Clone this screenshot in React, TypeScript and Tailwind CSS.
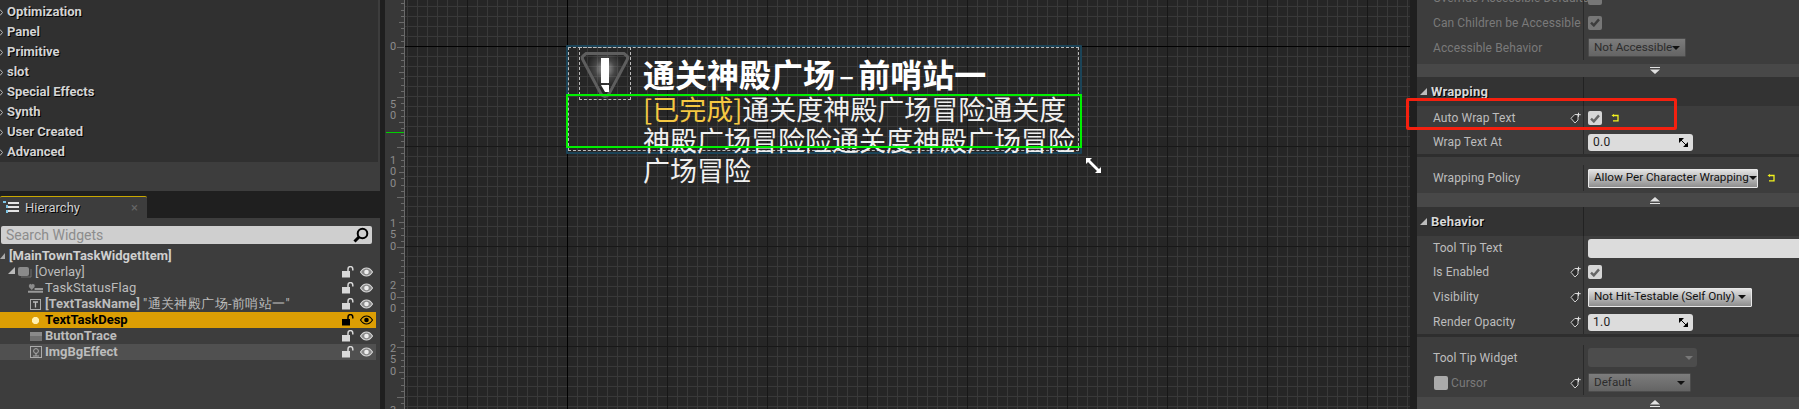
import type { ReactNode } from "react";

const PALETTE = ["Optimization", "Panel", "Primitive", "slot", "Special Effects", "Synth", "User Created", "Advanced"];
const RULER_LABELS = [
  { y: 47, text: "0" },
  { y: 110, text: "50" },
  { y: 172, text: "100" },
  { y: 235, text: "150" },
  { y: 297, text: "200" },
  { y: 360, text: "250" },
  { y: 422, text: "300" },
];

const LockEye = ({ dark }: { dark?: boolean }) => {
  const c = dark ? "#000" : "#d8d8d8";
  return (
    <div className="absolute left-[342px] top-[2px] flex gap-[6px]">
      <svg width="12" height="12" viewBox="0 0 12 12">
        <rect x="0" y="5" width="8" height="6.5" fill={c} />
        <path d="M6 5V3a2.4 2.4 0 0 1 4.8 0v1.4" stroke={c} strokeWidth="1.5" fill="none" />
      </svg>
      <svg width="13" height="12" viewBox="0 0 13 12">
        <path d="M0.5 6C2.5 2.8 4.5 2 6.5 2s4 .8 6 4c-2 3.2-4 4-6 4s-4-.8-6-4Z" stroke={c} strokeWidth="1.2" fill={dark ? "none" : "#8a8a8a"} />
        <circle cx="6.5" cy="6" r="2.3" fill={dark ? "#000" : "#eee"} />
      </svg>
    </div>
  );
};

const TreeRow = ({ icon, children, className = "" }: { icon: ReactNode; children: ReactNode; className?: string }) => (
  <div className={`relative h-4 w-[376px] ${className}`}>
    <div className="absolute left-[28px] top-0 flex h-4 w-[15px] items-center justify-center">{icon}</div>
    <div className="absolute left-[45px] top-0 whitespace-nowrap leading-4">{children}</div>
    <LockEye dark={className.includes("bg-[#dc9e04]")} />
  </div>
);

const Check = ({ dim }: { dim?: boolean }) => (
  <div className={`flex h-[14px] w-[14px] items-center justify-center rounded-[2px] ${dim ? "bg-[#777]" : "bg-[#d6d6d6]"}`}>
    <svg width="10" height="9" viewBox="0 0 10 9">
      <path d="M1 4.6 3.8 7.4 9 1.4" stroke={dim ? "#3d3d3d" : "#666"} strokeWidth="2.4" fill="none" />
    </svg>
  </div>
);

const Bind = () => (
  <svg width="11" height="11" viewBox="0 0 11 11" className="absolute left-[153px] top-1/2 -translate-y-1/2">
    <path d="M1 5.8 4.8 2H8V7.5L5 10.5Z" fill="#2c2c2c" stroke="#d0d0d0" strokeWidth="1" />
    <path d="M8.5 0V4.4M6.3 2.2H10.7" stroke="#e0e0e0" strokeWidth="1" />
  </svg>
);

const Reset = ({ className }: { className: string }) => (
  <svg width="8" height="8" viewBox="0 0 8 8" className={className}>
    <path d="M2 1.5H7V6.8H2" stroke="#f2f21e" strokeWidth="1.3" fill="none" />
    <path d="M3 0V3L0.5 1.5Z" fill="#f2f21e" />
  </svg>
);

const Caret = ({ color = "#111" }: { color?: string }) => (
  <svg width="8" height="4" viewBox="0 0 8 4" className="shrink-0">
    <path d="M0 0H8L4 4Z" fill={color} />
  </svg>
);

const Drop = ({ label, width, dim }: { label: string; width: string; dim?: boolean }) => (
  <div
    className={`flex h-[19px] items-center justify-between rounded-[1px] pr-[5px] pl-[5px] text-[11.7px] ${width} ${
      dim
        ? "border border-[#4c4c4c] bg-[linear-gradient(#7c7c7c,#646464)] text-[#2c2c2c]"
        : "border border-[#e8e8e8] bg-[linear-gradient(#e2e2e2,#8e8e8e)] text-[#111]"
    }`}
  >
    <span className="whitespace-nowrap">{label}</span>
    <Caret />
  </div>
);

const Spin = ({ value }: { value: string }) => (
  <div className="relative flex h-[17px] w-[105px] items-center rounded-[3px] bg-[#dcdcdc] pl-[5px] text-[12px] tracking-[0.3px] text-[#222]">
    {value}
    <svg width="9" height="9" viewBox="0 0 9 9" className="absolute right-[5px] top-[4px]">
      <path d="M0 0H5L0 5ZM9 9H4L9 4Z" fill="#000" />
      <path d="M2 2 7 7" stroke="#000" strokeWidth="1" />
    </svg>
  </div>
);

const Prop = ({
  label,
  h,
  dim,
  bind,
  children,
  labelPrefix,
}: {
  label: string;
  h: string;
  dim?: boolean;
  bind?: boolean;
  children?: ReactNode;
  labelPrefix?: ReactNode;
}) => (
  <div className={`relative flex items-center ${h}`}>
    <div className={`relative flex h-full w-[166px] shrink-0 items-center gap-[3px] pl-[16px] ${dim ? "text-[#7a7a7a]" : "text-[#bdbdbd]"}`}>
      {labelPrefix}
      <span className="whitespace-nowrap tracking-[0.1px]">{label}</span>
      {bind && <Bind />}
    </div>
    <div className="relative flex h-full grow items-center border-l border-l-[#2a2a2a] pl-[4px]">{children}</div>
  </div>
);

const Bar = ({ up, h }: { up?: boolean; h: string }) => (
  <div className={`flex items-center bg-[#484848] pl-[233px] ${h}`}>
    <svg width="10" height="7" viewBox="0 0 10 7">
      {up ? <path d="M0 6H10V7H0ZM5 0 10 4.6H0Z" fill="#e0e0e0" /> : <path d="M0 0H10V1H0ZM0 2.4H10L5 7Z" fill="#e0e0e0" />}
    </svg>
  </div>
);

const Section = ({ title, h }: { title: string; h: string }) => (
  <div className={`relative flex items-center bg-[#333] ${h}`}>
    <div className="flex h-full w-[166px] items-center pl-[3px]">
      <svg width="7" height="7" viewBox="0 0 7 7" className="mr-[4px]">
        <path d="M7 0V7H0Z" fill="#bdbdbd" />
      </svg>
      <span className="text-[13px] font-bold tracking-[0.2px] text-[#d8d8d8] [text-shadow:1px_1px_0_#000]">{title}</span>
    </div>
    <div className="h-full border-l border-l-[#222]" />
  </div>
);

const App = () => (
  <div className="relative flex h-[409px] w-[1799px] overflow-hidden bg-[#1f1f1f] font-['Roboto',sans-serif] text-[12px]">
    {/* left column: palette + hierarchy */}
    <div className="flex w-[380px] shrink-0 flex-col">
      <div className="h-[191px] bg-[#3d3d3d]">
        <div className="h-[162px] w-[378px] bg-[#303030] pt-[2px]">
          {PALETTE.map((name) => (
            <div key={name} className="relative h-5 pl-[7px] text-[13px] leading-5 font-bold text-[#d4d4d4] [text-shadow:1px_1px_0_#000]">
              <svg width="3" height="7" viewBox="0 0 3 7" className="absolute top-[7px] left-0">
                <path d="M0 0.5 2.5 3.5 0 6.5" stroke="#bbb" fill="none" />
              </svg>
              {name}
            </div>
          ))}
        </div>
      </div>
      <div className="mt-[5px] flex h-[22px] w-[147px] items-center rounded-t-[2px] border-t border-t-[#c9a800] bg-[#3d3d3d] pl-[3px]">
        <svg width="16" height="13" viewBox="0 0 16 13">
          <path d="M5 1H16V3H5ZM5 5H16V7H5ZM5 9H16V11H5Z" fill="#e4e4e4" />
          <path d="M0 0h3v2h-3zM3 4h2v3h-2zM3 9h2v3h-2z" fill="#7ec7e8" />
        </svg>
        <span className="ml-[6px] text-[13px] text-[#d0d0d0] [text-shadow:1px_1px_0_#000]">Hierarchy</span>
        <span className="mr-[9px] ml-auto text-[13px] leading-none text-[#666]">×</span>
      </div>
      <div className="grow bg-[#3d3d3d] pt-[8px] text-[13px] text-[#bcbcbc]">
        <div className="relative ml-[1px] flex h-[18px] w-[371px] items-center rounded-[2px] bg-[#cfcfcf] pl-[5px] text-[14px] text-[#8c8c8c]">
          Search Widgets
          <svg width="16" height="16" viewBox="0 0 16 16" className="absolute top-[1px] right-[3px]">
            <circle cx="9.5" cy="6.5" r="4.8" stroke="#000" strokeWidth="2" fill="none" />
            <path d="M6 10 1.5 14.5" stroke="#000" strokeWidth="3" />
          </svg>
        </div>
        <div className="mt-[4px] flex h-4 items-center text-[13px] font-bold text-[#cfcfcf]">
          <svg width="6" height="6" viewBox="0 0 6 6" className="mr-[3px]">
            <path d="M5 0V6H0Z" fill="#aaa" />
          </svg>
          [MainTownTaskWidgetItem]
        </div>
        <div className="relative h-4 w-[376px]">
          <svg width="24" height="14" viewBox="0 0 24 14" className="absolute top-[1px] left-[8px]">
            <path d="M7 2V9H0Z" fill="#bbb" />
            <rect x="10" y="2" width="11" height="9" rx="2" fill="#8a8a8a" />
            <path d="M13 12H23V4" stroke="#707070" fill="none" />
          </svg>
          <span className="absolute left-[35px] leading-4">[Overlay]</span>
          <LockEye />
        </div>
        <TreeRow
          icon={
            <svg width="16" height="11" viewBox="0 0 16 11">
              <path d="M1 1.5 3 0.5 4 1.5 5 0.5 7 1.5V4L4 7 1 4Z" fill="#8c8c8c" />
              <path d="M0 8H16V10H0ZM7 5H16V7H7Z" fill="#999" />
            </svg>
          }
        >
          <span className="tracking-[0.15px]">TaskStatusFlag</span>
        </TreeRow>
        <TreeRow
          icon={
            <svg width="11" height="11" viewBox="0 0 11 11">
              <rect x="0.5" y="0.5" width="10" height="10" fill="none" stroke="#aaa" />
              <path d="M3 3H8M5.5 3V8.5" stroke="#bbb" strokeWidth="1.3" />
            </svg>
          }
        >
          <b>[TextTaskName]</b> <span className="tracking-[0.4px]">"通关神殿广场-前哨站一"</span>
        </TreeRow>
        <TreeRow
          className="bg-[#dc9e04] font-bold text-[#000]"
          icon={
            <svg width="7" height="7" viewBox="0 0 7 7">
              <path d="M2 0H5L7 2V5L5 7H2L0 5V2Z" fill="#fff0b0" />
            </svg>
          }
        >
          TextTaskDesp
        </TreeRow>
        <TreeRow
          className="font-bold"
          icon={
            <svg width="12" height="9" viewBox="0 0 12 9">
              <rect width="12" height="9" fill="#8a8a8a" />
              <rect y="4" width="12" height="5" fill="#707070" />
            </svg>
          }
        >
          ButtonTrace
        </TreeRow>
        <TreeRow
          className="bg-[#505050] font-bold"
          icon={
            <svg width="12" height="12" viewBox="0 0 12 12">
              <rect x="0.5" y="0.5" width="11" height="11" fill="none" stroke="#aaa" />
              <circle cx="6" cy="5" r="2.4" fill="none" stroke="#aaa" />
              <path d="M6 7V10M3 10H9" stroke="#aaa" />
            </svg>
          }
        >
          ImgBgEffect
        </TreeRow>
      </div>
    </div>

    {/* ruler */}
    <div className="relative ml-[5px] w-[20px] shrink-0 border-r border-r-[#6a6a6a] bg-[#383838] text-[11px] leading-[11px] text-[#8c8c8c]">
      <svg width="19" height="409" className="absolute top-0 left-0">
        {Array.from({ length: 66 }).map((_, i) => {
          const y = Math.round(47 + (i - 7) * 6.25);
          const len = i % 8 === 7 ? 7 : i % 4 === 3 ? 5 : 3;
          return <line key={i} x1={19 - len} x2="19" y1={y + 0.5} y2={y + 0.5} stroke="#6a6a6a" />;
        })}
        <line x1="1" x2="19" y1="132.5" y2="132.5" stroke="#00d000" />
      </svg>
      {RULER_LABELS.map((l) => (
        <div key={l.y} className="absolute left-[5px] w-[6px] text-center" style={{ top: l.y - (l.text.length * 11.5) / 2 }}>
          {l.text.split("").map((d, i) => (
            <div key={i} className="h-[11.5px]">
              {d}
            </div>
          ))}
        </div>
      ))}
    </div>

    {/* designer canvas */}
    <div className="relative w-[1005px] shrink-0 overflow-hidden bg-[#262626] font-['Noto_Sans_CJK_SC',sans-serif]">
      <svg className="absolute inset-0 h-full w-full">
        <defs>
          <pattern id="minor" width="10" height="10" x="2" y="6" patternUnits="userSpaceOnUse">
            <path d="M0.5 0V10M0 0.5H10" stroke="#393939" strokeWidth="1" />
          </pattern>
        </defs>
        <rect width="100%" height="100%" fill="url(#minor)" />
        {[62, 262, 362, 462, 562, 662, 762, 862, 962].map((x) => (
          <line key={x} x1={x + 0.5} x2={x + 0.5} y1="0" y2="409" stroke="#171717" />
        ))}
        {[146, 246, 346].map((y) => (
          <line key={y} x1="0" x2="1005" y1={y + 0.5} y2={y + 0.5} stroke="#171717" />
        ))}
        <line x1="162.5" x2="162.5" y1="0" y2="409" stroke="#000" />
        <line x1="0" x2="1005" y1="46.5" y2="46.5" stroke="#000" />
      </svg>

      {/* selected widget */}
      <div className="absolute top-[45px] left-[161px] h-[109px] w-[516px] rounded-[1px] border-2 border-[#1b4458]" />
      <div className="absolute top-[47px] left-[163px] h-[104px] w-[511px] border border-dashed border-[#bdbdbd]" />
      <div className="absolute top-[47px] left-[174px] h-[53px] w-[52px] border border-dashed border-[#bdbdbd]" />
      <svg width="52" height="53" viewBox="0 0 52 53" className="absolute top-[47px] left-[174px]">
        <defs>
          <radialGradient id="glow">
            <stop offset="0" stopColor="#fff" stopOpacity="0.6" />
            <stop offset="0.55" stopColor="#fff" stopOpacity="0.15" />
            <stop offset="1" stopColor="#fff" stopOpacity="0" />
          </radialGradient>
        </defs>
        <circle cx="26" cy="22" r="18" fill="url(#glow)" />
        <path d="M4 9Q2.5 11 4 13L22 47Q26 52 30 47L48 13Q49.5 11 48 9L45 6.5H7Z" fill="none" stroke="#5e5e5e" strokeWidth="3" />
        <rect x="22" y="11" width="8" height="25" fill="#fff" />
        <path d="M22 38H30V45H26Z" fill="#fff" />
      </svg>
      <div className="absolute top-[52px] left-[238px] h-[42px] whitespace-nowrap text-[32px] leading-[42px] font-bold text-white">
        通关神殿广场<span className="mx-[6px] inline-block scale-x-150 font-normal">-</span>前哨站一
      </div>
      <div className="absolute top-[94px] left-[238px] w-[440px] text-[27px] leading-[30.5px] font-normal text-[#f0f0f0]">
        <span className="text-[#f5c842]">[已完成]</span>
        通关度神殿广场冒险通关度
        <br />
        神殿广场冒险险通关度神殿广场冒险
        <br />
        广场冒险
      </div>
      <div className="absolute top-[94px] left-[161px] h-[54px] w-[516px] border-2 border-[#00f000]" />
      <svg width="17" height="17" viewBox="0 0 17 17" className="absolute top-[157px] left-[680px]">
        <path d="M1 1H7L5 3 14 12 16 10V16H10L12 14 3 5 1 7Z" fill="#fff" />
      </svg>
    </div>

    {/* details panel */}
    <div className="ml-[7px] w-[382px] shrink-0 bg-[#3d3d3d] text-[12px]">
      <div className="-mt-[15px]">
        <Prop label="Override Accessible Defaults" h="h-[25px]" dim>
          <div className="h-[14px] w-[14px] rounded-[2px] bg-[#777]" />
        </Prop>
        <Prop label="Can Children be Accessible" h="h-[25px]" dim>
          <Check dim />
        </Prop>
        <Prop label="Accessible Behavior" h="h-[25px]" dim>
          <Drop label="Not Accessible" width="w-[98px]" dim />
        </Prop>
        <div className="h-[4px]" />
        <Bar h="h-[13px]" />
        <Section title="Wrapping" h="h-[29px]" />
        <Prop label="Auto Wrap Text" h="h-[24px]" bind>
          <Check />
          <Reset className="ml-[9px]" />
        </Prop>
        <Prop label="Wrap Text At" h="h-[24px]">
          <Spin value="0.0" />
        </Prop>
        <div className="h-[11px] border-t-[3px] border-t-[#2e2e2e]" />
        <Prop label="Wrapping Policy" h="h-[26px]">
          <Drop label="Allow Per Character Wrapping" width="w-[170px]" />
          <Reset className="ml-[9px]" />
        </Prop>
        <div className="h-[2px]" />
        <Bar up h="h-[14px]" />
        <Section title="Behavior" h="h-[29px]" />
        <Prop label="Tool Tip Text" h="h-[24px]">
          <div className="h-[19px] w-full rounded-l-[3px] bg-[#dcdcdc]" />
        </Prop>
        <Prop label="Is Enabled" h="h-[24px]" bind>
          <Check />
        </Prop>
        <Prop label="Visibility" h="h-[26px]" bind>
          <Drop label="Not Hit-Testable (Self Only)" width="w-[164px]" />
        </Prop>
        <Prop label="Render Opacity" h="h-[24px]" bind>
          <Spin value="1.0" />
        </Prop>
        <div className="h-[11px] border-t-[3px] border-t-[#2e2e2e]" />
        <Prop label="Tool Tip Widget" h="h-[25px]">
          <div className="flex h-[19px] w-[109px] items-center justify-end rounded-[3px] bg-[#4c4c4c] pr-[4px]">
            <Caret color="#777" />
          </div>
        </Prop>
        <Prop label="Cursor" h="h-[25px]" bind dim labelPrefix={<div className="ml-[1px] h-[14px] w-[14px] rounded-[2px] bg-[#aaa]" />}>
          <Drop label="Default" width="w-[103px]" dim />
        </Prop>
        <div className="h-[2px]" />
        <Bar up h="h-[12px]" />
      </div>
    </div>

    {/* annotation drawn on top of the screenshot */}
    <div className="absolute top-[98px] left-[1406px] h-[32px] w-[271px] rounded-[2px] border-[3px] border-[#f5200f]" />
  </div>
);

export default App;
